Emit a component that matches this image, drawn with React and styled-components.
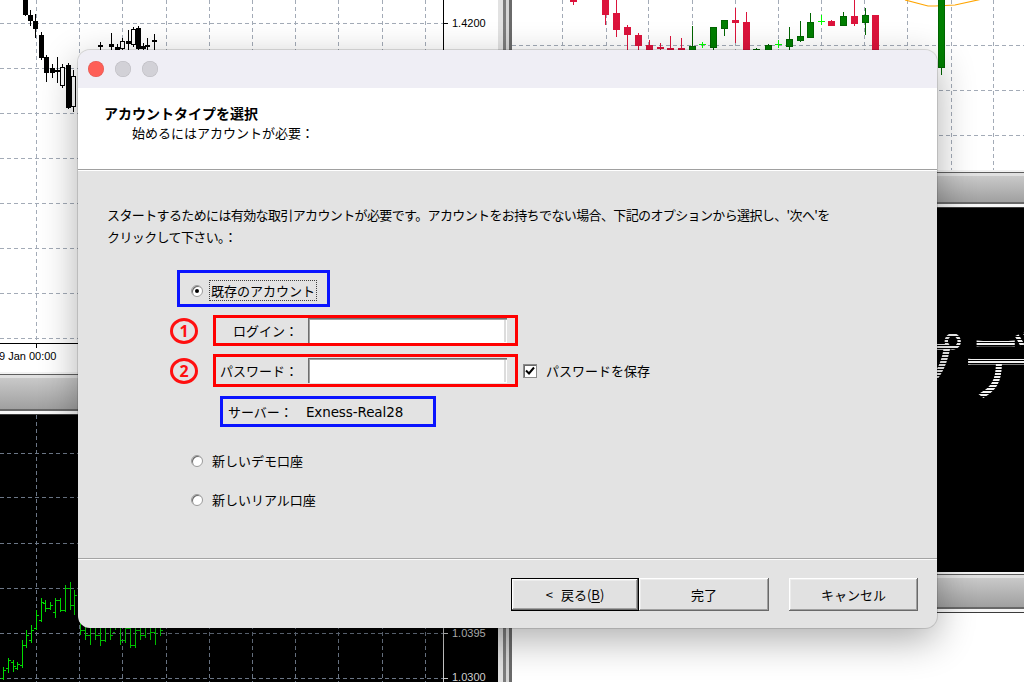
import React from "react";
import styled, { createGlobalStyle } from "styled-components";

const GlobalStyle = createGlobalStyle`
  html, body {
    margin: 0;
    padding: 0;
    background: #fff;
  }
  body {
    font-family: "Noto Sans CJK JP", "Noto Sans", sans-serif;
    color: #000;
  }
`;

// ---- background: MetaTrader chart windows ----

const Desktop = styled.div`
  position: relative;
  width: 1024px;
  height: 682px;
  overflow: hidden;
  display: grid;
  grid-template-columns: 498px 14px 512px;
  background: #fff;
`;

const Column = styled.div`
  display: flex;
  flex-direction: column;
  min-width: 0;
`;

const Splitter = styled.div`
  background: linear-gradient(
    to right,
    #e2e2e2 0 5px,
    #7c7c7c 5px 8px,
    #d6d6d6 8px 11px,
    #6a6a6a 11px 14px
  );
`;

const ChartPane = styled.div`
  position: relative;
  flex: ${(p) => (p.$h ? "none" : "1")};
  height: ${(p) => (p.$h ? `${p.$h}px` : "auto")};
  background: ${(p) => p.$bg};
  overflow: hidden;

  svg {
    display: block;
  }
`;

const WindowStrip = styled.div`
  flex: none;
  height: ${(p) => p.$h}px;
  background: linear-gradient(
    to bottom,
    #f2f2f2 0 2px,
    #5e5e5e 2px 3px,
    #e0e0e0 3px 6px,
    #c9c9c9 6px,
    #a0a0a0 calc(100% - 6px),
    #686868 calc(100% - 6px) calc(100% - 4px),
    #f6f6f6 calc(100% - 4px) calc(100% - 1px),
    #3c3c3c calc(100% - 1px)
  );
`;

const range = (n) => Array.from({ length: n }, (_, i) => i);
const leftXs = range(10).map((i) => Math.round(36 + i * 43.2));

const Grid = ({ xs, ys, w, h, color }) => (
  <g stroke={color} strokeWidth="1" strokeDasharray="4 3">
    {xs.map((x) => (
      <line key={`v${x}`} x1={x + 0.5} y1={0} x2={x + 0.5} y2={h} />
    ))}
    {ys.map((y) => (
      <line key={`h${y}`} x1={0} y1={y + 0.5} x2={w} y2={y + 0.5} />
    ))}
  </g>
);

// [x, bodyTop, bodyBottom, high, low, bear]
const monoCandles = [
  [25, -2, 14, -5, 16, 1],
  [30, 15, 20, 10, 26, 1],
  [35, 21, 28, 14, 38, 1],
  [41, 35, 57, 32, 60, 1],
  [46, 57, 72, 55, 82, 1],
  [52, 68, 72, 64, 78, 1],
  [57, 70, 71, 57, 83, 1],
  [62, 67, 85, 64, 88, 0],
  [68, 65, 107, 63, 109, 1],
  [73, 76, 106, 70, 112, 0],
  [100, 45, 46, 42, 52, 0],
  [111, 44, 46, 33, 52, 1],
  [117, 47, 49, 44, 52, 1],
  [122, 41, 48, 38, 52, 0],
  [128, 41, 43, 30, 52, 1],
  [133, 29, 44, 27, 47, 0],
  [138, 28, 48, 26, 52, 1],
  [143, 46, 48, 43, 52, 1],
  [147, 45, 46, 38, 52, 0],
  [154, 40, 41, 34, 52, 0],
];

// [x, bodyTop, bodyBottom, high, low, kind]
const colorCandles = [
  [61, 0, 1, -2, 5, "r"],
  [93, -2, 14, -2, 25, "r"],
  [104, 13, 29, 0, 37, "r"],
  [115, 27, 34, 25, 55, "r"],
  [126, 35, 45, 33, 55, "r"],
  [137, 45, 50, 40, 55, "r"],
  [148, 47, 48, 43, 55, "r"],
  [158, 48, 49, 36, 55, "r"],
  [169, 48, 49, 38, 55, "r"],
  [180, 46, 52, 26, 55, "g"],
  [190, 44, 45, 42, 48, "x"],
  [201, 27, 47, 27, 55, "g"],
  [212, 20, 28, 20, 36, "g"],
  [223, 20, 22, 8, 43, "r"],
  [234, 22, 52, 12, 55, "r"],
  [244, 49, 52, 48, 55, "g"],
  [256, 45, 52, 44, 55, "g"],
  [266, 44, 45, 40, 48, "x"],
  [277, 39, 46, 27, 55, "g"],
  [288, 36, 40, 21, 42, "g"],
  [298, 22, 37, 13, 37, "g"],
  [309, 21, 22, 15, 25, "x"],
  [319, 21, 25, 20, 26, "r"],
  [331, 16, 25, 12, 25, "g"],
  [342, 16, 23, 0, 26, "r"],
  [353, 15, 22, 8, 35, "g"],
  [363, 15, 55, 15, 55, "r"],
  [429, -2, 67, -2, 75, "g"],
];

// [x, high, low, open, close] in page coordinates
const greenBars = [
  [3, 667, 680, 678, 670], [8, 658, 673, 668, 660], [13, 660, 672, 662, 666],
  [17, 662, 670, 668, 664], [22, 640, 668, 665, 645], [26, 630, 648, 645, 635],
  [31, 625, 643, 640, 630], [36, 610, 630, 628, 615], [41, 598, 622, 620, 602],
  [45, 600, 612, 603, 608], [50, 602, 610, 608, 605], [55, 598, 618, 612, 600],
  [60, 598, 612, 600, 610], [65, 585, 612, 610, 588], [70, 582, 610, 588, 605],
  [74, 590, 615, 605, 595], [80, 600, 635, 610, 630], [85, 620, 640, 630, 635],
  [90, 615, 645, 635, 620], [95, 610, 640, 620, 635], [100, 615, 646, 635, 640],
  [105, 620, 642, 640, 625], [110, 615, 640, 625, 635], [115, 610, 630, 632, 615],
  [120, 615, 645, 615, 640], [125, 618, 643, 640, 628], [130, 620, 648, 628, 645],
  [135, 625, 648, 645, 630], [140, 620, 640, 630, 635], [145, 615, 638, 635, 620],
  [150, 618, 640, 620, 632], [155, 612, 645, 632, 615], [160, 615, 636, 615, 630],
];

const AXIS_FONT = "Liberation Sans, Arial, sans-serif";

const TopLeftChart = () => (
  <svg width="498" height="372">
    <Grid xs={leftXs} ys={range(8).map((i) => 23 + i * 45)} w={443} h={343} color="#a3abb7" />
    {monoCandles.map(([x, t, b, hi, lo, bear]) => (
      <g key={x} stroke="#000" strokeWidth="1">
        <line x1={x + 0.5} y1={hi} x2={x + 0.5} y2={lo} />
        <rect x={x - 1.5} y={t + 0.5} width="4" height={Math.max(b - t, 1)} fill={bear ? "#000" : "#fff"} />
      </g>
    ))}
    <line x1="443.5" y1="0" x2="443.5" y2="343" stroke="#000" />
    <line x1="0" y1="343.5" x2="444" y2="343.5" stroke="#000" />
    <line x1="443" y1="23.5" x2="448" y2="23.5" stroke="#000" />
    <text x="452" y="27" fontFamily={AXIS_FONT} fontSize="11" fill="#000">1.4200</text>
    <line x1="36.5" y1="343" x2="36.5" y2="348" stroke="#000" />
    <text x="-1" y="360" fontFamily={AXIS_FONT} fontSize="11" fill="#000">9 Jan 00:00</text>
  </svg>
);

const BottomLeftChart = () => (
  <svg width="498" height="267">
    <Grid xs={leftXs} ys={[38, 82, 128, 173, 218, 263]} w={443} h={267} color="#6c7787" />
    <g stroke="#00dc00" strokeWidth="1">
      {greenBars.map(([x, hi, lo, o, c]) => (
        <g key={x}>
          <line x1={x + 0.5} y1={hi - 415} x2={x + 0.5} y2={lo - 415} />
          <line x1={x - 2} y1={o - 415 + 0.5} x2={x} y2={o - 415 + 0.5} />
          <line x1={x + 1} y1={c - 415 + 0.5} x2={x + 3} y2={c - 415 + 0.5} />
        </g>
      ))}
    </g>
    <line x1="443.5" y1="0" x2="443.5" y2="267" stroke="#c8c8c8" />
    <line x1="443" y1="218.5" x2="448" y2="218.5" stroke="#c8c8c8" />
    <line x1="443" y1="263.5" x2="448" y2="263.5" stroke="#c8c8c8" />
    <text x="452" y="222" fontFamily={AXIS_FONT} fontSize="11" fill="#d0d0d0">1.0395</text>
    <text x="452" y="266" fontFamily={AXIS_FONT} fontSize="11" fill="#d0d0d0">1.0300</text>
  </svg>
);

const candleFill = { r: "#dc143c", g: "#007f00" };

const TopRightChart = () => (
  <svg width="512" height="170">
    <Grid
      xs={[50, 94, 136, 180, 223, 266, 309, 352, 395, 439, 481]}
      ys={[45, 90, 135]}
      w={512}
      h={170}
      color="#a3abb7"
    />
    <polyline
      points="393,0 416,6 423,6 443,5 466,0 476,-3"
      fill="none"
      stroke="#ffa500"
      strokeWidth="1.2"
    />
    {colorCandles.map(([x, t, b, hi, lo, k]) =>
      k === "x" ? (
        <g key={x} stroke="#00ff00" strokeWidth="1">
          <line x1={x + 0.5} y1={hi} x2={x + 0.5} y2={lo} />
          <line x1={x - 3} y1={t + 0.5} x2={x + 4} y2={t + 0.5} />
        </g>
      ) : (
        <g key={x} stroke={k === "r" ? "#dc143c" : "#006400"} strokeWidth="1">
          <line x1={x + 0.5} y1={hi} x2={x + 0.5} y2={lo} />
          <rect x={x - 2.5} y={t + 0.5} width="6" height={Math.max(b - t, 1)} fill={candleFill[k]} />
        </g>
      )
    )}
  </svg>
);

const UpdateBanner = () => (
  <svg width="512" height="364">
    <defs>
      <pattern id="scan" width="4" height="3" patternUnits="userSpaceOnUse">
        <rect width="4" height="2" fill="#f2f2f2" />
      </pattern>
    </defs>
    <text
      x="378"
      y="185"
      fontFamily="Noto Sans CJK JP, sans-serif"
      fontSize="72"
      fill="url(#scan)"
    >
      プデ
    </text>
  </svg>
);

// ---- dialog ----

const Dialog = styled.div`
  position: absolute;
  left: 78px;
  top: 50px;
  width: 859px;
  height: 578px;
  border-radius: 12px;
  overflow: hidden;
  display: flex;
  flex-direction: column;
  background: #e3e3e3;
  box-shadow: 0 0 0 1px rgba(0, 0, 0, 0.12), 0 12px 38px rgba(0, 0, 0, 0.32);
`;

const TitleBar = styled.div`
  flex: none;
  height: 38px;
  display: flex;
  align-items: center;
  gap: 11px;
  padding-left: 10px;
  background: #efeef5;
`;

const Light = styled.span`
  width: 16px;
  height: 16px;
  border-radius: 50%;
  background: ${(p) => p.$color};
  box-shadow: inset 0 0 0 0.5px rgba(0, 0, 0, 0.12);
`;

const Header = styled.div`
  flex: none;
  box-sizing: border-box;
  height: 82px;
  padding: 15px 0 0 26px;
  background: #fff;
  border-bottom: 1px solid #a0a0a0;
`;

const HeaderTitle = styled.div`
  font-size: 14px;
  font-weight: 700;
  line-height: 20px;
`;

const HeaderSub = styled.div`
  font-size: 13px;
  line-height: 20px;
  margin-left: 28px;
`;

const Body = styled.div`
  flex: 1;
  padding: 33px 0 0 29px;
  border-top: 1px solid #fff;
  font-size: 13px;
`;

const Intro = styled.p`
  margin: 0;
  line-height: 22px;
  letter-spacing: -0.62px;
`;

const Options = styled.div`
  display: flex;
  flex-direction: column;
  align-items: flex-start;
  margin-top: 22px;
`;

const Row = styled.div`
  display: flex;
  align-items: center;
  margin-left: ${(p) => p.$indent}px;
  margin-top: ${(p) => p.$top || 0}px;
`;

const BlueBox = styled.div`
  box-sizing: border-box;
  display: flex;
  align-items: center;
  gap: 6px;
  height: ${(p) => p.$h}px;
  width: ${(p) => p.$w}px;
  padding: ${(p) => p.$drop || 0}px 0 0 ${(p) => p.$pad}px;
  border: 3px solid #0a14ff;
`;

const RedBox = styled.div`
  box-sizing: border-box;
  display: flex;
  align-items: center;
  width: 305px;
  height: ${(p) => p.$h}px;
  border: 3px solid #ff0000;
`;

const NumberBadge = styled.span`
  box-sizing: border-box;
  display: flex;
  align-items: center;
  justify-content: center;
  width: 28px;
  height: 26px;
  margin-right: 15px;
  border: 3px solid #ff1010;
  border-radius: 50%;
  color: #ff1010;
  font-family: "Noto Sans", sans-serif;
  font-size: 16px;
  font-weight: 700;
  line-height: 1;
`;

const FieldLabel = styled.label`
  width: 92px;
  padding-right: 10px;
  box-sizing: border-box;
  text-align: right;
  white-space: nowrap;
`;

const TextField = styled.input`
  box-sizing: border-box;
  width: 199px;
  height: 25px;
  padding: 0 4px;
  border: none;
  outline: none;
  background: #fff;
  box-shadow: inset 1px 1px #6e6e6e, inset 2px 2px #a0a0a0, inset -1px -1px #fff,
    inset -3px -1px #dcdcdc;
  font: inherit;
`;

const RadioMark = styled.span`
  position: relative;
  flex: none;
  box-sizing: border-box;
  width: 12px;
  height: 12px;
  border-radius: 50%;
  background: #fff;
  border: 1px solid #9b9b9b;
  box-shadow: inset 1px 1px #6a6a6a;

  &::after {
    content: "";
    display: ${(p) => (p.$checked ? "block" : "none")};
    position: absolute;
    left: 3px;
    top: 3px;
    width: 4px;
    height: 4px;
    border-radius: 50%;
    background: #000;
  }
`;

const RadioText = styled.span`
  margin-left: 9px;
  line-height: 20px;
  white-space: nowrap;
`;

const FocusText = styled.span`
  padding: 0 1px;
  line-height: 19px;
  border: 1px dotted #404040;
  white-space: nowrap;
`;

const CheckBox = styled.span`
  flex: none;
  box-sizing: border-box;
  display: flex;
  align-items: center;
  justify-content: center;
  width: 14px;
  height: 14px;
  margin-left: 5px;
  background: #fff;
  border: 1px solid #8a8a8a;
  box-shadow: inset 1px 1px #6a6a6a;
`;

const CheckText = styled.span`
  margin-left: 9px;
  white-space: nowrap;
`;

const ServerName = styled.span`
  margin-left: 7px;
  font-family: "DejaVu Sans", sans-serif;
  font-size: 13.5px;
  letter-spacing: -0.1px;
`;

const Footer = styled.div`
  flex: none;
  height: 70px;
  box-sizing: border-box;
  display: flex;
  align-items: center;
  justify-content: flex-end;
  gap: 20px;
  padding: 1px 19px 0 0;
  border-top: 1px solid #a4a4a4;
  box-shadow: inset 0 1px #fbfbfb;
`;

const ButtonGroup = styled.div`
  display: flex;
`;

const Button = styled.button`
  box-sizing: border-box;
  width: ${(p) => p.$w}px;
  height: 33px;
  padding: 0;
  background: #e1e1e1;
  border: ${(p) => (p.$default ? "1px solid #000" : "none")};
  box-shadow: inset -1px -1px #696969, inset 1px 1px #fff, inset -2px -2px #a0a0a0,
    inset 2px 2px #ececec;
  font-family: "Noto Sans CJK JP", sans-serif;
  font-size: 13px;
  color: #000;

  u {
    text-underline-offset: 2px;
  }
`;

const BackArrow = styled.span`
  margin-right: 8px;
`;

const CheckIcon = () => (
  <svg width="10" height="10" viewBox="0 0 10 10">
    <path d="M1 4.5 L4 7.5 L9 1.5" fill="none" stroke="#000" strokeWidth="2" />
  </svg>
);

export default function App() {
  return (
    <>
      <GlobalStyle />
      <Desktop>
        <Column>
          <ChartPane $h={372} $bg="#fff">
            <TopLeftChart />
          </ChartPane>
          <WindowStrip $h={43} />
          <ChartPane $bg="#000">
            <BottomLeftChart />
          </ChartPane>
        </Column>
        <Splitter />
        <Column>
          <ChartPane $h={170} $bg="#fff">
            <TopRightChart />
          </ChartPane>
          <WindowStrip $h={38} />
          <ChartPane $h={364} $bg="#000">
            <UpdateBanner />
          </ChartPane>
          <WindowStrip $h={41} />
          <ChartPane $bg="#fff" />
        </Column>

        <Dialog>
          <TitleBar>
            <Light $color="#fe5f57" />
            <Light $color="#d2d1d7" />
            <Light $color="#d2d1d7" />
          </TitleBar>
          <Header>
            <HeaderTitle>アカウントタイプを選択</HeaderTitle>
            <HeaderSub>始めるにはアカウントが必要：</HeaderSub>
          </Header>
          <Body>
            <Intro>
              スタートするためには有効な取引アカウントが必要です。アカウントをお持ちでない場合、下記のオプションから選択し、'次へ'を
              <br />
              クリックして下さい。：
            </Intro>
            <Options>
              <Row $indent={70}>
                <BlueBox $h={37} $w={153} $pad={11} $drop={4}>
                  <RadioMark $checked />
                  <FocusText>既存のアカウント</FocusText>
                </BlueBox>
              </Row>
              <Row $indent={63} $top={8}>
                <NumberBadge>1</NumberBadge>
                <RedBox $h={31}>
                  <FieldLabel>ログイン：</FieldLabel>
                  <TextField type="text" readOnly />
                </RedBox>
              </Row>
              <Row $indent={63} $top={8}>
                <NumberBadge>2</NumberBadge>
                <RedBox $h={33}>
                  <FieldLabel>パスワード：</FieldLabel>
                  <TextField type="password" readOnly />
                </RedBox>
                <CheckBox>
                  <CheckIcon />
                </CheckBox>
                <CheckText>パスワードを保存</CheckText>
              </Row>
              <Row $indent={113} $top={9}>
                <BlueBox $h={31} $w={216} $pad={5}>
                  サーバー：
                  <ServerName>Exness-Real28</ServerName>
                </BlueBox>
              </Row>
              <Row $indent={84} $top={24}>
                <RadioMark />
                <RadioText>新しいデモ口座</RadioText>
              </Row>
              <Row $indent={84} $top={19}>
                <RadioMark />
                <RadioText>新しいリアル口座</RadioText>
              </Row>
            </Options>
          </Body>
          <Footer>
            <ButtonGroup>
              <Button $w={128} $default>
                <BackArrow>&lt;</BackArrow>戻る(<u>B</u>)
              </Button>
              <Button $w={130}>完了</Button>
            </ButtonGroup>
            <Button $w={129}>キャンセル</Button>
          </Footer>
        </Dialog>
      </Desktop>
    </>
  );
}
